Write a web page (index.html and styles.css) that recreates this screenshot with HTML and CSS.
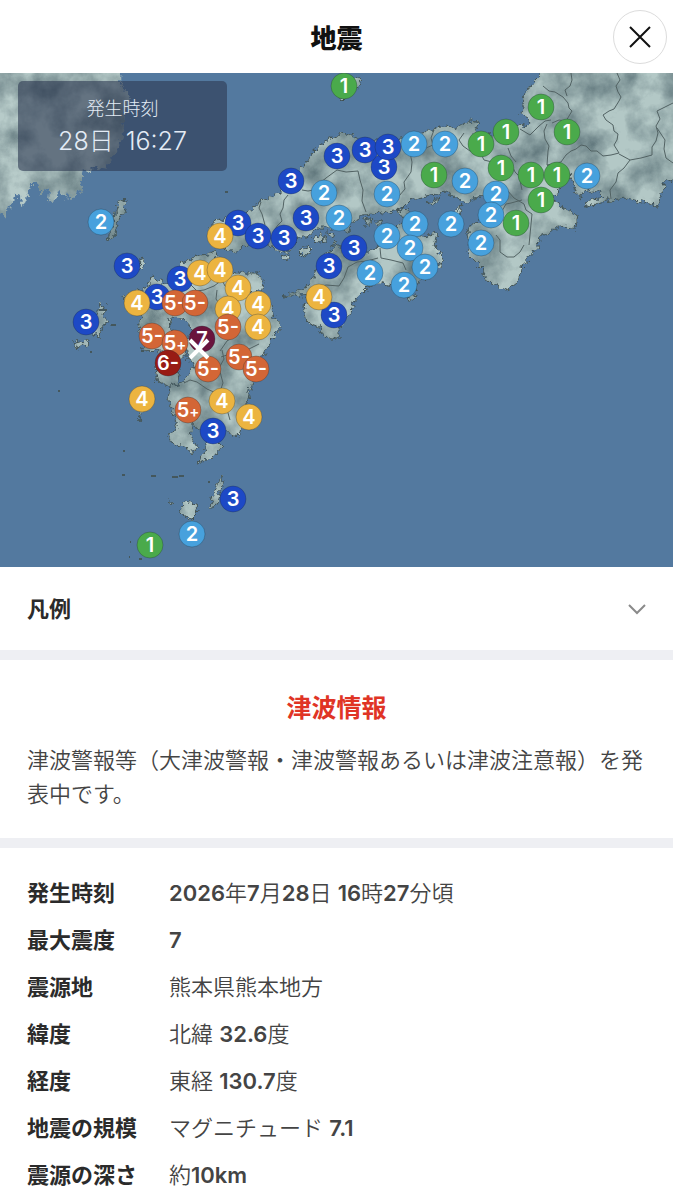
FILE: index.html
```html
<!DOCTYPE html>
<html lang="ja">
<head>
  <meta charset="UTF-8" />
  <meta name="viewport" content="width=device-width, initial-scale=1.0"/>
  <title>地震</title>
  <link rel="stylesheet" href="styles.css">
</head>
<body>
  <header class="header">
    <h1 class="title">地震</h1>
    <button class="close" type="button" aria-label="閉じる">
      <svg width="22" height="22" viewBox="0 0 22 22"><path d="M1 1L21 21M21 1L1 21"/></svg>
    </button>
  </header>

  <div class="map">
    <svg class="map-svg" viewBox="0 73 673 494">
      <defs>
        <filter id="terrain" filterUnits="userSpaceOnUse" x="0" y="60" width="690" height="520" color-interpolation-filters="sRGB">
          <feTurbulence type="fractalNoise" baseFrequency="0.2" numOctaves="3" seed="4" result="rough"/>
          <feDisplacementMap in="SourceGraphic" in2="rough" scale="9" xChannelSelector="R" yChannelSelector="G" result="shape"/>
          <feTurbulence type="fractalNoise" baseFrequency="0.03" numOctaves="5" seed="9" result="noise"/>
          <feColorMatrix in="noise" type="matrix" values="0 0 0 0 0.28  0 0 0 0 0.37  0 0 0 0 0.4  1.5 0 0 0 -0.5" result="shade"/>
          <feComposite in="shade" in2="shape" operator="in" result="relief"/>
          <feMerge><feMergeNode in="shape"/><feMergeNode in="relief"/></feMerge>
        </filter>
      </defs>
      <rect class="sea" y="73" width="673" height="494"/>
      <g filter="url(#terrain)">
        <!-- Korea -->
        <path class="korea" d="M-9 63H121L120 85 130 97 127 108 125 112 123 132 117 152 106 166 101 170 95 168 88 171 83 170 81 178 82 188 76 196 72 200 68 192 66 200 61 190 57 192 54 203 49 202 50 191 45 188 41 195 37 184 30 184 28 195 24 204 21 206 20 195 16 192 14 202 9 206 6 219 2 214-9 215Z"/>
        <!-- Honshu -->
        <path class="land" d="M212 222L221 219 238 218 252 210 258 202 285 190 302 168 317 147 330 138 345 133 363 140 393 142 420 133 440 127 456 128 470 120 478 123 475 133 482 138 495 133 510 130 523 123 526 128 530 122 521 114 523 97 533 82 539 76 541 60H685V174L665 183 657 206 627 198 610 200 585 207 587 202 602 197 600 191 590 190 580 194 582 200 577 196 572 180 570 172 567 179 560 187 553 200 563 208 577 215 575 228 560 227 540 237 537 248 523 265 517 283 508 290 487 282 482 268 467 253 470 243 467 227 483 218 490 200 483 195 467 203 447 193 430 195 410 200 400 210 380 213 363 215 353 223 337 228 317 228 307 237 297 237 290 252 280 252 267 245 250 243 237 252 225 250 212 235Z"/>
        <!-- Shikoku -->
        <path class="land" d="M337 242L341 249 360 257 377 248 387 230 402 223 420 237 437 233 434 245 443 259 433 273 417 285 411 303 406 296 397 287 380 283 367 288 355 300 350 315 338 330 338 339 323 337 320 327 308 323 303 307 311 294 282 297 309 286 320 262Z"/>
        <!-- Kyushu -->
        <path class="land" d="M185 262L193 258 203 255 215 252 220 260 235 273 248 273 256 273 263 279 262 290 252 293 260 303 271 306 272 314 282 326 275 334 268 347 260 363 252 381 247 403 240 437 233 436 227 429 218 441 223 446 213 457 199 463 206 447 211 438 202 430 192 425 190 437 197 447 193 453 183 446 173 445 167 435 178 430 173 410 168 400 170 386 182 383 194 367 187 353 185 340 194 330 183 318 171 317 169 327 186 340 185 357 168 362 160 350 142 351 146 341 138 327 142 317 127 307 123 297 147 287 153 277 167 285 177 268Z"/>
        <!-- Islands -->
        <path class="land" d="M122 199L127 202 124 211 118 221 114 238 108 241 110 229 114 219 116 207Z"/>
        <path class="land" d="M140 259L144 262 142 270 139 269ZM100 303L105 306 103 315 110 321 102 326 99 337 92 333 95 321ZM74 342L89 340 88 347 83 345 77 350Z"/>
        <path class="land" d="M156 367L180 371 177 384 169 386 158 381ZM154 377L158 376 157 382ZM138 411L143 412 140 420Z"/>
        <path class="land" d="M180 505L187 502 196 505 198 513 192 519 184 517ZM221 477L223 480 221 490 215 507 210 509 211 500ZM167 500L173 502 171 505Z"/>
        <path class="land" d="M347 79L360 77 362 84 357 88ZM339 97L345 99 342 102ZM449 219L462 204 458 220 449 229ZM397 211L406 208 411 214 402 217Z"/>
        <path class="land" d="M313 239L322 234 326 240 317 243ZM297 251L308 247 312 251 303 257ZM343 225L351 223 349 232 342 230ZM364 219L370 218 371 224 365 224ZM376 221L382 222 379 226ZM427 202L440 198 433 204ZM281 257L289 254 286 261ZM327 233L334 234 330 239Z"/>
      </g>
      <!-- Small islets -->
      <path class="islet" d="M123 199h3M151 476h5M172 477h6M179 476h5M208 482h2M122 475h3M123 451h2M58 391h2M130 542h1M139 559h3M129 557h1M225 192h3M124 199v3M111 325h5M99 310h8M90 352h2M141 351h3"/>
      <!-- Prefecture borders -->
      <path class="border" d="M261 202L259 208 262 214 265 225M288 195L284 200 283 208 280 214 282 221 277 226 274 232M302 190L308 191 314 190 320 183 326 178 337 170 346 172 358 171 360 180 363 190 362 201 366 212M407 145L410 153 412 162 411 172 404 182 405 189 399 196M434 130L431 138 433 145 426 148 419 152M464 133L459 140 463 146 470 151 481 154 484 160 492 162 498 160 505 166 512 165 515 172 519 176 522 190M508 148L511 156 516 162M520 129L530 135 539 126 545 121 551 120M543 86L549 91 555 92 563 97 568 103 569 108 572 111 566 121 559 120 552 123M571 73L572 80 570 86 565 90 567 96M617 73L620 80 616 86 618 92 621 97 619 101 614 109 609 111 603 115 606 120 613 125 614 131 618 134 617 140 614 145 619 153 611 155 603 156 597 151 591 151 586 146 581 145 576 149 571 151 566 155 561 162 547 165M630 160L624 168 618 173 616 182 610 190 611 199M673 103L665 107 657 111 660 119 656 126 658 133 656 141 652 147 652 155 641 158 630 160 619 154M657 128L665 140 664 149 666 158 673 163M547 124L544 131 545 139 549 146 548 151 547 165 555 171 552 184M507 190L514 198 524 204 526 210 532 214 529 245M496 235L500 240 500 252 507 257 514 257 520 252 524 245M502 211L506 204 511 203 522 200M380 248L381 258 391 260 403 263 406 270M313 289L326 285 339 286 344 278 348 267 357 262 367 261 378 258M191 285L197 291 204 290 214 286 222 280 225 286 231 291M167 301L178 302 184 309 196 309M217 290L216 299 222 308 230 319 232 328 236 335 227 341 220 351M221 357L230 354 240 350 249 349 259 344M184 383L190 380 197 382 207 389 216 393 225 390M222 350L224 359 219 368 223 383 218 397 226 406 230 420"/>

      <g id="pins"></g>

      <path class="epicenter" d="M190 340L208 358M208 340L190 358"/>
    </svg>
    <div class="stamp">
      <div class="stamp-label">発生時刻</div>
      <div class="stamp-time"><span>28日</span><span>16:27</span></div>
    </div>
  </div>

  <button class="legend" type="button" aria-expanded="false">
    凡例
    <svg width="18" height="12" viewBox="0 0 18 12"><path d="M1 2L9 10L17 2"/></svg>
  </button>

  <section class="tsunami">
    <h2 class="tsunami-title">津波情報</h2>
    <p class="tsunami-text">津波警報等（大津波警報・津波警報あるいは津波注意報）を発表中です。</p>
  </section>

  <dl class="details">
    <dt>発生時刻</dt>
    <dd><b>2026</b>年<b>7</b>月<b>28</b>日 <b>16</b>時<b>27</b>分頃</dd>
    <dt>最大震度</dt>
    <dd><b>7</b></dd>
    <dt>震源地</dt>
    <dd>熊本県熊本地方</dd>
    <dt>緯度</dt>
    <dd>北緯 <b>32.6</b>度</dd>
    <dt>経度</dt>
    <dd>東経 <b>130.7</b>度</dd>
    <dt>地震の規模</dt>
    <dd>マグニチュード <b>7.1</b></dd>
    <dt>震源の深さ</dt>
    <dd>約<b>10km</b></dd>
  </dl>

  <script src="script.js"></script>
</body>
</html>
```

FILE: styles.css
```css
* {
  box-sizing: border-box;
}

body {
  margin: 0;
  background: #fff;
  color: #2b2b2b;
  font-family: Inter, "Noto Sans CJK JP", sans-serif;
  font-size: 22px;
}

.header {
  display: grid;
  grid-template-columns: 1fr auto 1fr;
  align-items: center;
  height: 73px;
  padding: 0 6px;
}

.title {
  grid-column: 2;
  margin: 0;
  color: #111;
  font-size: 26px;
  font-weight: 900;
}

.close {
  display: flex;
  align-items: center;
  justify-content: center;
  justify-self: end;
  width: 54px;
  height: 54px;
  padding: 0;
  background: #fff;
  border: 1px solid #dcdcdc;
  border-radius: 50%;
  cursor: pointer;
}

.close path {
  fill: none;
  stroke: #111;
  stroke-width: 2;
}

/* Map */
.map {
  position: relative;
}

.map-svg {
  display: block;
  width: 100%;
}

.sea {
  fill: #53799f;
}

.korea {
  fill: #b7cbc9;
}

.land {
  fill: #b3c8c6;
  stroke: #435253;
  stroke-width: 1;
}

.islet {
  stroke: #44575c;
  stroke-width: 2;
}

.border {
  fill: none;
  stroke: #526263;
  stroke-width: 1;
  stroke-linejoin: round;
}

.pin circle {
  stroke: rgba(30, 40, 50, 0.3);
  stroke-width: 1;
}

.pin text {
  fill: #fff;
  font-size: 20px;
  font-weight: 600;
  text-anchor: middle;
}

.pin .plus {
  font-size: 15px;
}

.s1 { fill: #4aaa4b; }
.s2 { fill: #47a1dd; }
.s3 { fill: #1d49c6; }
.s4 { fill: #ecb440; }
.s5 { fill: #d36636; }
.s6 { fill: #981b14; }
.s7 { fill: #6a143d; }

.epicenter {
  stroke: #fff;
  stroke-width: 4;
}

.stamp {
  position: absolute;
  top: 8px;
  left: 18px;
  width: 209px;
  padding: 14px 0 12px;
  background: rgba(45, 56, 82, 0.6);
  border-radius: 5px;
  color: #e3ebf5;
  font-weight: 300;
  text-align: center;
}

.stamp-label {
  font-size: 18px;
  line-height: 28px;
}

.stamp-time {
  display: flex;
  justify-content: center;
  gap: 12px;
  font-size: 25px;
  line-height: 36px;
}

/* Sections */
.legend {
  display: flex;
  align-items: center;
  justify-content: space-between;
  width: 100%;
  height: 83px;
  padding: 0 27px 4px;
  background: #fff;
  border: 0;
  color: #2b2b2b;
  font-family: inherit;
  font-size: 22px;
  font-weight: 700;
  cursor: pointer;
}

.legend svg {
  margin-top: 4px;
}

.legend path {
  fill: none;
  stroke: #8a8a8a;
  stroke-width: 2;
}

.tsunami {
  padding: 29px 27px 27px;
  border-top: 10px solid #eeeff3;
  border-bottom: 10px solid #eeeff3;
}

.tsunami-title {
  margin: 0 0 16px;
  color: #e03425;
  font-size: 25px;
  font-weight: 700;
  line-height: 38px;
  text-align: center;
}

.tsunami-text {
  margin: 0;
  color: #444;
  font-weight: 350;
  line-height: 34px;
}

.details {
  display: grid;
  grid-template-columns: 142px 1fr;
  margin: 0;
  padding: 22px 27px 0;
  line-height: 47px;
}

.details dt {
  font-weight: 700;
}

.details dd {
  margin: 0;
  color: #444;
  font-weight: 350;
}

.details b {
  font-weight: 600;
}
```

FILE: script.js
```js
// [x, y, intensity]
const pins = [
  [344, 86, '1'], [541, 107, '1'], [567, 132, '1'], [506, 132, '1'], [481, 144, '1'],
  [434, 175, '1'], [501, 168, '1'], [531, 175, '1'], [557, 175, '1'], [541, 200, '1'],
  [516, 223, '1'], [150, 545, '1'],
  [101, 222, '2'], [414, 144, '2'], [445, 144, '2'], [465, 181, '2'], [387, 194, '2'],
  [496, 194, '2'], [587, 176, '2'], [491, 215, '2'], [324, 193, '2'], [339, 218, '2'],
  [451, 224, '2'], [415, 224, '2'], [387, 236, '2'], [481, 243, '2'], [410, 248, '2'],
  [425, 267, '2'], [370, 273, '2'], [404, 285, '2'], [192, 534, '2'],
  [384, 167, '3'], [365, 150, '3'], [388, 147, '3'], [337, 156, '3'], [291, 181, '3'],
  [306, 218, '3'], [238, 223, '3'], [258, 236, '3'], [284, 238, '3'], [354, 248, '3'],
  [329, 266, '3'], [334, 315, '3'], [127, 266, '3'], [180, 279, '3'], [157, 297, '3'],
  [86, 322, '3'], [213, 431, '3'], [233, 499, '3'],
  [220, 236, '4'], [200, 273, '4'], [220, 270, '4'], [238, 288, '4'], [258, 304, '4'],
  [228, 309, '4'], [258, 327, '4'], [137, 303, '4'], [319, 297, '4'], [142, 399, '4'],
  [222, 401, '4'], [249, 417, '4'],
  [175, 303, '5-'], [195, 303, '5-'], [228, 327, '5-'], [152, 336, '5-'], [175, 343, '5+'],
  [208, 369, '5-'], [239, 357, '5-'], [256, 369, '5-'], [188, 410, '5+'],
  [168, 363, '6-'], [202, 339, '7']
];

document.getElementById('pins').innerHTML = pins.map(([x, y, level]) => {
  const label = level.replace('+', '<tspan class="plus">+</tspan>');
  return `<g class="pin" transform="translate(${x} ${y})"><circle class="s${level[0]}" r="13"/><text y="7">${label}</text></g>`;
}).join('');
```
